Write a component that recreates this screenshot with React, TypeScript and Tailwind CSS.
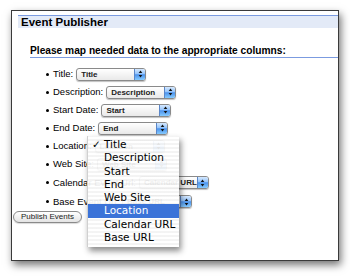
import React from "react";

const sans = "font-['Liberation_Sans',Arial,sans-serif]";

function Popup({ value, width = 70 }: { value: string; width?: number }) {
  return (
    <div
      className="flex h-[13px] overflow-hidden rounded-[3px] border border-[#8a8a8a] bg-linear-to-b from-white to-[#e9e9e9] shadow-[0_1px_1px_rgba(0,0,0,0.25)]"
      style={{ width }}
    >
      <span className="flex-1 overflow-hidden whitespace-nowrap pl-[4px] text-[8px] font-bold leading-[11px] text-[#222]">
        {value}
      </span>
      <span className="flex w-[11px] shrink-0 items-center justify-center border-l border-[#5a86c8] bg-[linear-gradient(to_bottom,#d6e9ff_0%,#93c3fb_45%,#4b92ec_52%,#86cbff_100%)]">
        <svg width="5" height="8" viewBox="0 0 5 8">
          <path d="M2.5 0.6 L4.3 3 L0.7 3 Z" fill="#111" />
          <path d="M0.7 5 L4.3 5 L2.5 7.4 Z" fill="#111" />
        </svg>
      </span>
    </div>
  );
}

const rows = [
  { label: "Title:", value: "Title" },
  { label: "Description:", value: "Description" },
  { label: "Start Date:", value: "Start" },
  { label: "End Date:", value: "End" },
  { label: "Location:", value: "Location" },
  { label: "Web Site:", value: "Web Site" },
  { label: "Calendar Event Url:", value: "Calendar URL" },
  { label: "Base Event Url:", value: "Base URL" },
];

const options = ["Title", "Description", "Start", "End", "Web Site", "Location", "Calendar URL", "Base URL"];

export default function App() {
  return (
    <div className={`h-[276px] w-[350px] bg-white pl-[11px] pt-[10px] ${sans}`}>
      <div className="relative h-[251px] w-[328px] border border-[#3a3a3a] bg-white shadow-[2px_4px_8px_rgba(0,0,0,0.55)]">
        {/* header */}
        <div className="ml-[6px] mt-[4px] h-[13px] border-t border-[#7b9be0] bg-[#e3eaf7] pl-[3px] text-[11.5px] font-bold leading-[12px] text-black">
          Event Publisher
        </div>

        <div className="ml-[18px] mt-[17px] border-b border-[#7b9be0] text-[10.2px] font-bold leading-[12px] text-black">
          Please map needed data to the appropriate columns:
        </div>

        <ul className="mt-[7px]">
          {rows.map((r, i) => (
            <li key={r.label} className={`flex items-center pl-[34px] ${i >= 6 ? "h-[19px]" : "h-[18px]"}`}>
              <span className="h-[3px] w-[3px] rounded-full bg-black" />
              <span className="ml-[4px] mr-[3px] text-[9.5px] leading-[12px] text-black">{r.label}</span>
              <Popup value={r.value} />
            </li>
          ))}
        </ul>

        <button className="ml-[1px] flex h-[12px] w-[69px] items-center justify-center rounded-full border border-[#8a8a8a] bg-linear-to-b from-white to-[#e4e4e4] text-[8px] leading-[10px] text-[#1a1a1a] shadow-[0_1px_1px_rgba(0,0,0,0.15)]">
          Publish Events
        </button>

        {/* open popup menu */}
        <div className="absolute left-[75px] top-[125px] h-[111px] w-[92px] border-l border-[#d0d0d0] bg-[repeating-linear-gradient(0deg,rgba(255,255,255,0.93)_0px,rgba(255,255,255,0.93)_2px,rgba(243,243,243,0.93)_2px,rgba(243,243,243,0.93)_4px)] pt-[2px] font-['DejaVu_Sans',sans-serif] shadow-[2px_4px_6px_rgba(0,0,0,0.45)]">
          {options.map((o, i) => (
            <div
              key={o}
              className={`relative h-[13.3px] whitespace-nowrap pl-[16px] text-[10.5px] leading-[13.3px] ${
                o === "Location" ? "bg-[#3b73d8] text-white" : "text-black"
              }`}
            >
              {i === 0 && <span className="absolute left-[4px] top-0">✓</span>}
              {o}
            </div>
          ))}
        </div>
      </div>
    </div>
  );
}
